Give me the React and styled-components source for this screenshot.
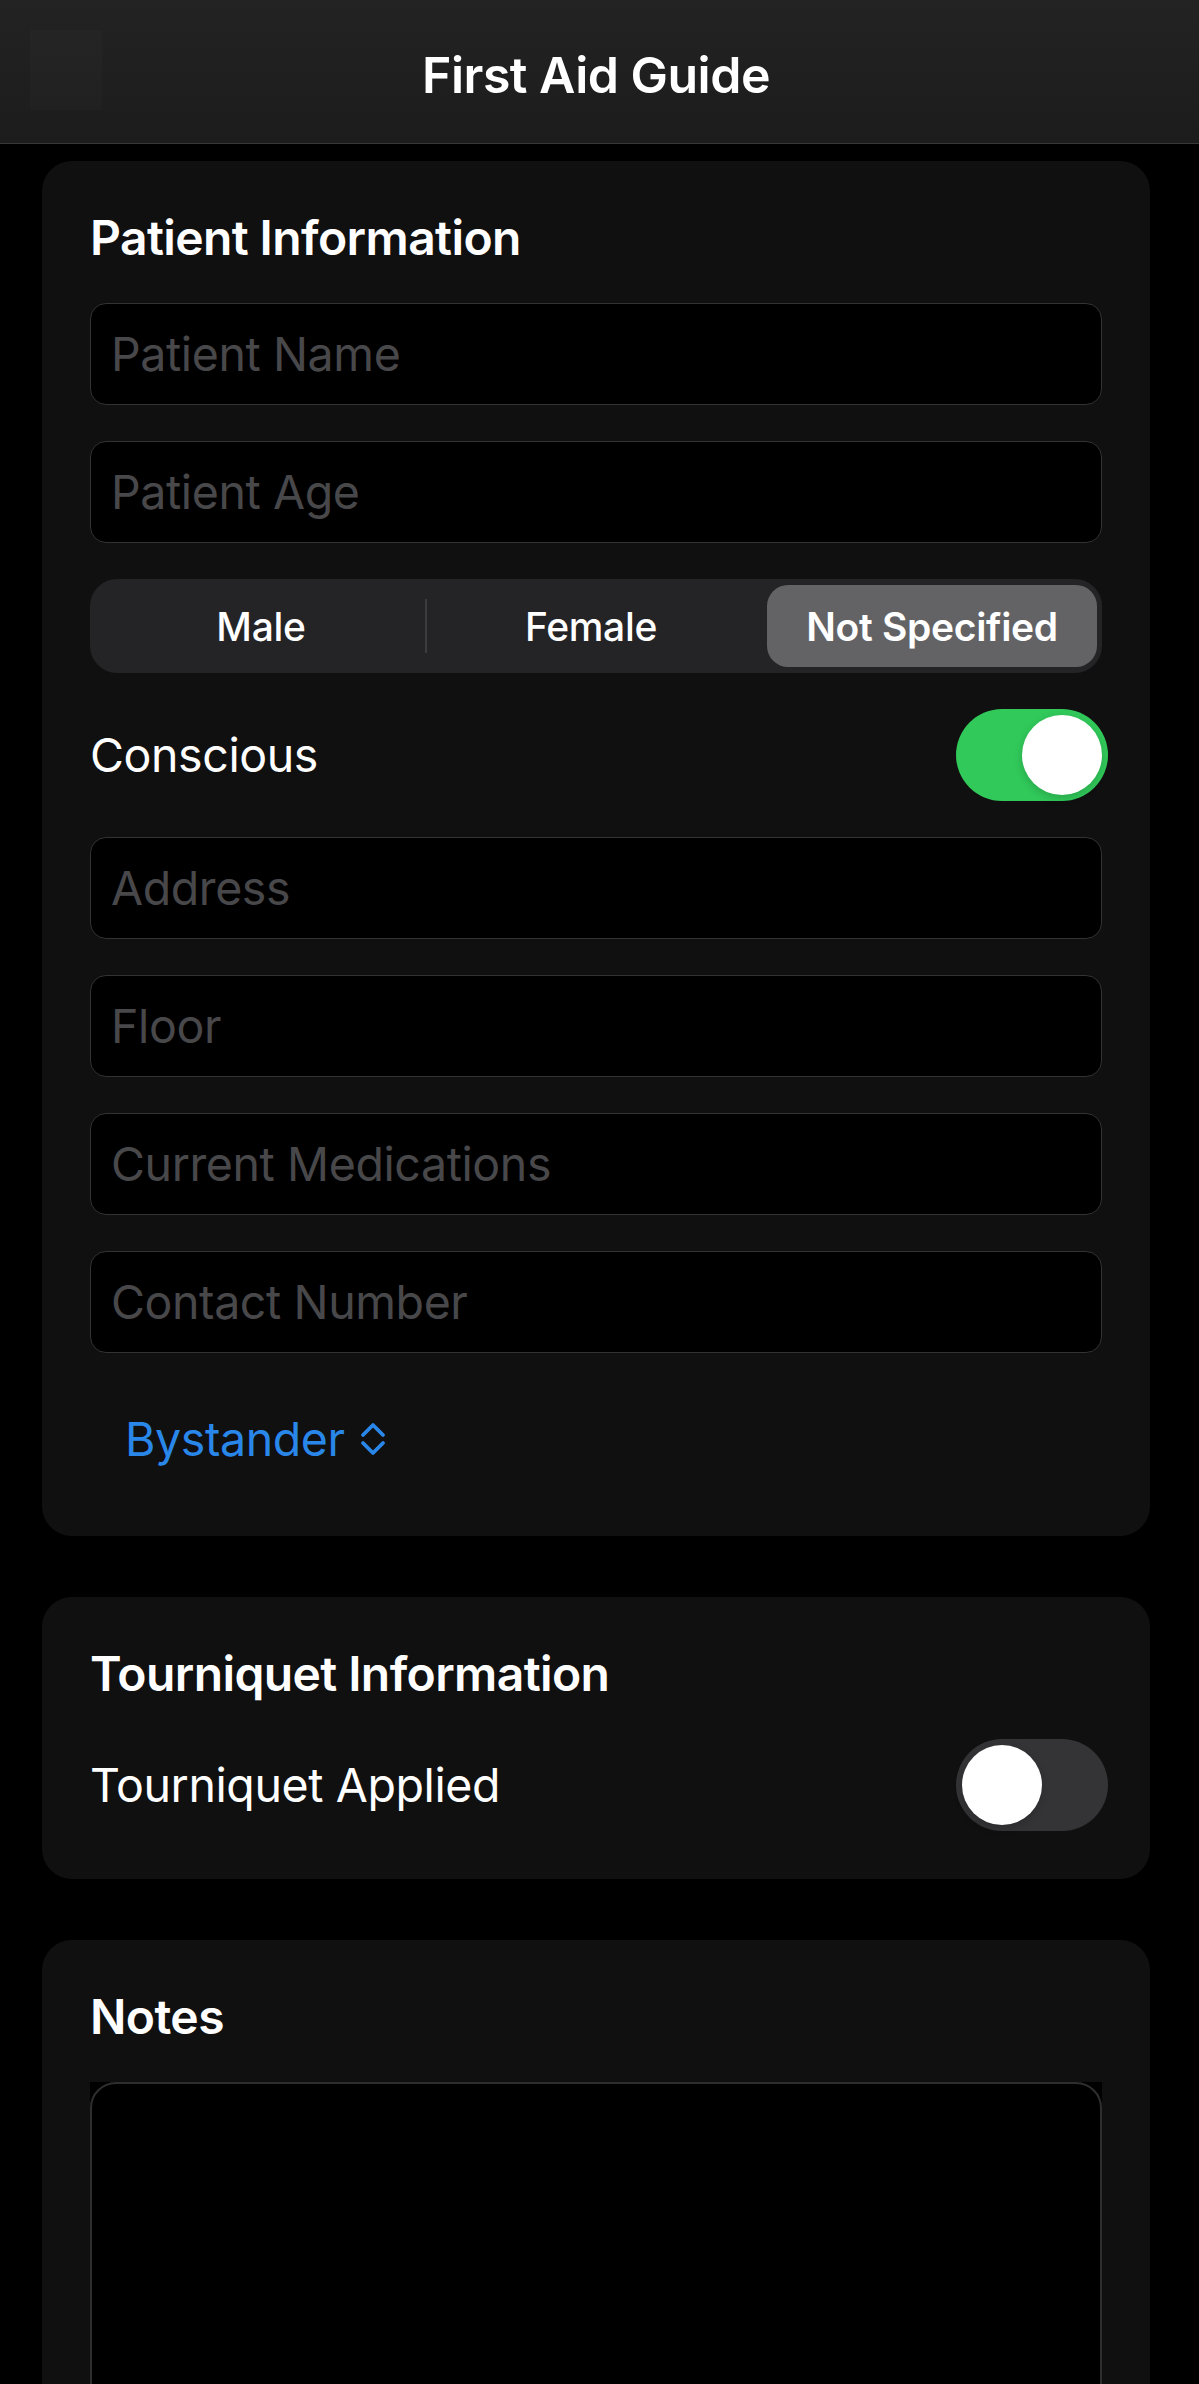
import React, { useState } from "react";
import styled, { createGlobalStyle, css } from "styled-components";

const GlobalStyle = createGlobalStyle`
  html, body {
    margin: 0;
    padding: 0;
    background: #000000;
  }
  * {
    box-sizing: border-box;
  }
`;

const font = css`
  font-family: "Inter", "Noto Sans", sans-serif;
`;

const ChevronUpDown = () => (
  <svg width="28" height="36" viewBox="0 0 28 36" fill="none">
    <path
      d="M4 14 L14 4 L24 14"
      stroke="currentColor"
      strokeWidth="3.8"
      strokeLinecap="round"
      strokeLinejoin="round"
    />
    <path
      d="M4 22 L14 32 L24 22"
      stroke="currentColor"
      strokeWidth="3.8"
      strokeLinecap="round"
      strokeLinejoin="round"
    />
  </svg>
);

const Toggle = ({ on, onChange }) => (
  <Track $on={on} onClick={() => onChange(!on)}>
    <Knob />
  </Track>
);

const App = () => {
  const [gender, setGender] = useState("Not Specified");
  const [conscious, setConscious] = useState(true);
  const [tourniquet, setTourniquet] = useState(false);
  const genders = ["Male", "Female", "Not Specified"];
  const selected = genders.indexOf(gender);

  return (
    <>
      <GlobalStyle />
      <Page>
        <NavBar>
          <BackSlot />
          <NavTitle>First Aid Guide</NavTitle>
          <NavSpacer />
        </NavBar>

        <Content>
          <Card>
            <Heading>Patient Information</Heading>
            <Field placeholder="Patient Name" />
            <Field placeholder="Patient Age" />
            <Segmented>
              {genders.map((g, i) => (
                <React.Fragment key={g}>
                  {i > 0 && (
                    <Divider $hidden={i === selected || i - 1 === selected} />
                  )}
                  <Segment $active={g === gender} onClick={() => setGender(g)}>
                    {g}
                  </Segment>
                </React.Fragment>
              ))}
            </Segmented>
            <ToggleRow>
              <RowLabel>Conscious</RowLabel>
              <Toggle on={conscious} onChange={setConscious} />
            </ToggleRow>
            <Field placeholder="Address" />
            <Field placeholder="Floor" />
            <Field placeholder="Current Medications" />
            <Field placeholder="Contact Number" />
            <MenuRow>
              <MenuButton>
                Bystander
                <ChevronUpDown />
              </MenuButton>
            </MenuRow>
          </Card>

          <Card>
            <Heading>Tourniquet Information</Heading>
            <ToggleRow>
              <RowLabel>Tourniquet Applied</RowLabel>
              <Toggle on={tourniquet} onChange={setTourniquet} />
            </ToggleRow>
          </Card>

          <Card>
            <Heading>Notes</Heading>
            <NotesBox>
              <Notes />
            </NotesBox>
          </Card>
        </Content>
      </Page>
    </>
  );
};

export default App;

const Page = styled.div`
  ${font}
  height: 100vh;
  overflow: hidden;
  display: flex;
  flex-direction: column;
  background: #000000;
  color: #ffffff;
`;

const NavBar = styled.header`
  flex: none;
  height: 144px;
  display: grid;
  grid-template-columns: 140px 1fr 147px;
  align-items: center;
  padding-top: 6px;
  border-bottom: 1px solid #38383a;
  background: linear-gradient(180deg, #232323 0%, #1c1c1c 100%);
`;

const BackSlot = styled.div`
  width: 72px;
  height: 80px;
  margin: 0 0 10px 30px;
  background: rgba(255, 255, 255, 0.014);
`;

const NavTitle = styled.h1`
  margin: 0;
  text-align: center;
  font-size: 50px;
  font-weight: 600;
  letter-spacing: -0.5px;
  color: #ffffff;
`;

const NavSpacer = styled.div``;

const Content = styled.main`
  display: flex;
  flex-direction: column;
  gap: 61px;
  padding: 17px 49px 0 42px;
`;

const Card = styled.section`
  display: flex;
  flex-direction: column;
  gap: 36px;
  padding: 48px;
  border-radius: 30px;
  background: #101010;
`;

const Heading = styled.h2`
  margin: 0;
  height: 58px;
  line-height: 58px;
  font-size: 48px;
  font-weight: 600;
  letter-spacing: -0.6px;
  color: #ffffff;
`;

const Field = styled.input`
  ${font}
  display: block;
  width: 100%;
  height: 102px;
  padding: 0 20px;
  border: 1.5px solid #333335;
  border-radius: 16px;
  background: #000000;
  font-size: 46.5px;
  letter-spacing: -0.4px;
  color: #ffffff;
  outline: none;

  &::placeholder {
    color: #48484b;
  }
`;

const Segmented = styled.div`
  display: flex;
  align-items: center;
  height: 94px;
  padding: 6px 5px 6px 6px;
  border-radius: 27px;
  background: #242427;
`;

const Segment = styled.button`
  ${font}
  flex: 1;
  height: 100%;
  border: 0;
  border-radius: 21px;
  padding: 0;
  margin-left: ${(p) => (p.$active ? "11px" : "0")};
  font-size: 39px;
  font-weight: ${(p) => (p.$active ? 600 : 500)};
  letter-spacing: -0.3px;
  color: #ffffff;
  background: ${(p) => (p.$active ? "#636366" : "transparent")};
  cursor: pointer;
`;

const Divider = styled.span`
  flex: none;
  width: 2px;
  height: 54px;
  margin: 0 -1px;
  background: ${(p) => (p.$hidden ? "transparent" : "#3c3c3f")};
`;

const ToggleRow = styled.div`
  display: flex;
  align-items: center;
  justify-content: space-between;
  height: 92px;
`;

const RowLabel = styled.span`
  font-size: 46.5px;
  letter-spacing: -0.4px;
  color: #ffffff;
`;

const Track = styled.div`
  flex: none;
  display: flex;
  align-items: center;
  justify-content: ${(p) => (p.$on ? "flex-end" : "flex-start")};
  width: 152px;
  height: 92px;
  margin-right: -6px;
  padding: 6px;
  border-radius: 46px;
  background: ${(p) => (p.$on ? "#31c95a" : "#343437")};
  cursor: pointer;
`;

const Knob = styled.span`
  width: 80px;
  height: 80px;
  border-radius: 50%;
  background: #ffffff;
  box-shadow: 0 3px 8px rgba(0, 0, 0, 0.18);
`;

const MenuRow = styled.div`
  display: flex;
  align-items: center;
  height: 99px;
  padding-left: 35px;
`;

const MenuButton = styled.button`
  ${font}
  display: flex;
  align-items: center;
  gap: 14px;
  border: 0;
  padding: 0;
  background: none;
  font-size: 46.5px;
  letter-spacing: -0.4px;
  color: #2a87ea;
  cursor: pointer;
`;

const NotesBox = styled.div`
  height: 420px;
  background: #000000;
`;

const Notes = styled.textarea`
  ${font}
  display: block;
  width: 100%;
  height: 100%;
  padding: 20px;
  border: 2px solid #2e2e30;
  border-radius: 26px;
  background: #000000;
  font-size: 46.5px;
  color: #ffffff;
  resize: none;
  outline: none;
`;
